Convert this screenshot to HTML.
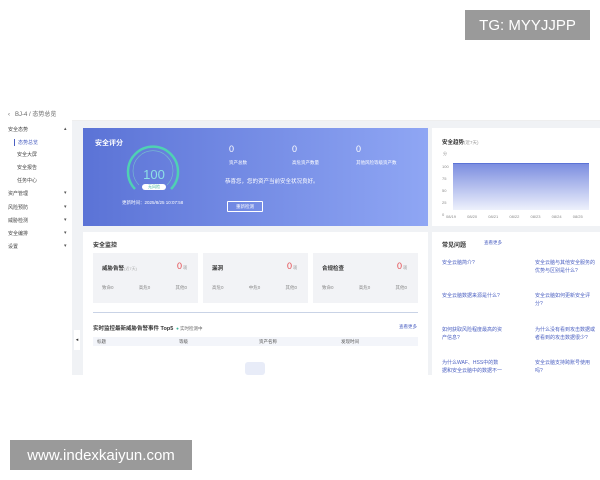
<!DOCTYPE html>
<html><head><meta charset="utf-8"><style>
*{margin:0;padding:0;box-sizing:border-box}
body{width:600px;height:480px;background:#fff;position:relative;overflow:hidden;font-family:"Liberation Sans","Noto Sans CJK SC",sans-serif;font-size:5px;color:#333}
.a{position:absolute}
.wm{background:#9a9a9a;color:#fff;font-size:15px;display:flex;align-items:center;justify-content:center}
.side div{position:absolute;left:8px;font-size:5px;color:#444}
.arr{position:absolute;left:64px;font-size:5px;color:#555}
.w{color:#fff}
.q{color:#4a5fc1;font-size:5px;line-height:8px;position:absolute;width:60px}
</style></head><body>
<div class="a wm" style="left:465px;top:10px;width:125px;height:30px">TG: MYYJJPP</div>
<div class="a wm" style="left:10px;top:440px;width:182px;height:30px">www.indexkaiyun.com</div>

<div class="a" style="left:8px;top:109px;font-size:6px;color:#666">‹ &nbsp; BJ-4 / 态势总览</div>
<div class="a" style="left:0;top:120px;width:600px;height:1px;background:#eee"></div>
<div class="a" style="left:72px;top:121px;width:528px;height:254px;background:#f0f2f5"></div>
<div class="a side" style="left:0;top:120px;width:72px;height:255px;background:#fff">
<div style="top:6px">安全态势</div><span class="arr" style="top:6px">▴</span>
<div style="top:19px;left:14px;color:#4a5fc1;border-left:1px solid #4a5fc1;padding-left:3px">态势总览</div>
<div style="top:31px;left:17px">安全大屏</div>
<div style="top:44px;left:17px">安全报告</div>
<div style="top:57px;left:17px">任务中心</div>
<div style="top:70px">资产管理</div><span class="arr" style="top:70px">▾</span>
<div style="top:84px">风险预防</div><span class="arr" style="top:84px">▾</span>
<div style="top:97px">威胁检测</div><span class="arr" style="top:97px">▾</span>
<div style="top:110px">安全编排</div><span class="arr" style="top:110px">▾</span>
<div style="top:123px">设置</div><span class="arr" style="top:123px">▾</span>
</div>
<div class="a" style="left:74px;top:330px;width:6px;height:20px;background:#fff;font-size:5px;color:#333;text-align:center;line-height:20px">◂</div>

<!-- blue card -->
<div class="a" style="left:83px;top:128px;width:345px;height:98px;background:linear-gradient(90deg,#5b73d6,#8fa6f4)"></div>
<div class="a w" style="left:95px;top:138px;font-size:7px;font-weight:bold">安全评分</div>
<svg class="a" style="left:124px;top:145px" width="58" height="50" viewBox="0 0 58 50"><path d="M11 44 A25 25 0 1 1 47 44" fill="none" stroke="#4fd1b3" stroke-width="2.5"/><path d="M15 40 A20 20 0 1 1 43 40" fill="none" stroke="#7fe0c9" stroke-width="0.6" opacity=".7"/></svg>
<div class="a" style="left:140px;top:167px;width:28px;text-align:center;font-size:13px;color:#8de0e5">100</div>
<div class="a" style="left:142px;top:184px;width:24px;height:6px;border-radius:3px;background:#fff;color:#3bb39a;font-size:4px;text-align:center;line-height:6px">无风险</div>
<div class="a w" style="left:122px;top:200px;font-size:4.5px">更新时间：2025/8/25 10:07:58</div>
<div class="a w" style="left:229px;top:144px;font-size:9px">0</div>
<div class="a w" style="left:229px;top:160px;font-size:4.5px">资产总数</div>
<div class="a w" style="left:292px;top:144px;font-size:9px">0</div>
<div class="a w" style="left:292px;top:160px;font-size:4.5px">高危资产数量</div>
<div class="a w" style="left:356px;top:144px;font-size:9px">0</div>
<div class="a w" style="left:356px;top:160px;font-size:4.5px">其他风险等级资产数</div>
<div class="a w" style="left:225px;top:177px;font-size:5.5px">恭喜您，您的资产当前安全状况良好。</div>
<div class="a w" style="left:227px;top:201px;width:36px;height:11px;border:1px solid #fff;border-radius:1px;font-size:4.5px;text-align:center;line-height:9px">重新检测</div>

<!-- trend -->
<div class="a" style="left:432px;top:128px;width:168px;height:98px;background:#fff"></div>
<div class="a" style="left:442px;top:138px;font-size:5.5px;font-weight:bold">安全趋势<span style="font-weight:normal;color:#999;font-size:4.5px">(近7天)</span></div>
<div class="a" style="left:443px;top:151px;font-size:4px;color:#888">分</div>
<div class="a" style="left:442px;top:161px;font-size:4px;color:#888;line-height:12px">100<br>75<br>50<br>25<br>0</div>
<div class="a" style="left:453px;top:163px;width:136px;height:47px;background:linear-gradient(#7c8ee0,#eef1fc);border-top:1px solid #5b73d6"></div>
<div class="a" style="left:446px;top:214px;font-size:4px;color:#888;word-spacing:10px">08/19 08/20 08/21 08/22 08/23 08/24 08/25</div>

<!-- monitor -->
<div class="a" style="left:83px;top:232px;width:345px;height:143px;background:#fff"></div>
<div class="a" style="left:93px;top:240px;font-size:6px;font-weight:bold">安全监控</div>
<div class="a" style="left:93px;top:253px;width:105px;height:50px;background:#f2f3f6"></div>
<div class="a" style="left:203px;top:253px;width:105px;height:50px;background:#f2f3f6"></div>
<div class="a" style="left:313px;top:253px;width:105px;height:50px;background:#f2f3f6"></div>
<div class="a" style="left:102px;top:264px;font-size:5.5px;font-weight:bold">威胁告警<span style="font-weight:normal;color:#aaa;font-size:4px">(近7天)</span></div>
<div class="a" style="left:177px;top:261px;font-size:9px;color:#e5484d">0<span style="font-size:4px;color:#888"> 项</span></div>
<div class="a" style="left:102px;top:285px;font-size:4.5px;color:#888;word-spacing:24px">致命0 高危0 其他0</div>
<div class="a" style="left:212px;top:264px;font-size:5.5px;font-weight:bold">漏洞</div>
<div class="a" style="left:287px;top:261px;font-size:9px;color:#e5484d">0<span style="font-size:4px;color:#888"> 项</span></div>
<div class="a" style="left:212px;top:285px;font-size:4.5px;color:#888;word-spacing:24px">高危0 中危0 其他0</div>
<div class="a" style="left:322px;top:264px;font-size:5.5px;font-weight:bold">合规检查</div>
<div class="a" style="left:397px;top:261px;font-size:9px;color:#e5484d">0<span style="font-size:4px;color:#888"> 项</span></div>
<div class="a" style="left:322px;top:285px;font-size:4.5px;color:#888;word-spacing:24px">致命0 高危0 其他0</div>
<div class="a" style="left:93px;top:312px;width:325px;height:1px;background:#c9d3e6"></div>
<div class="a" style="left:93px;top:324px;font-size:5.5px;font-weight:bold">实时监控最新威胁告警事件 Top5 <span style="font-weight:normal;color:#666;font-size:4.5px">&nbsp;<span style="color:#3bb39a">●</span> 实时检测中</span></div>
<div class="a" style="left:399px;top:324px;font-size:4.5px;color:#4a5fc1">查看更多</div>
<div class="a" style="left:93px;top:337px;width:325px;height:9px;background:#f3f5fa;font-size:4.5px;line-height:9px;color:#555">
<span class="a" style="left:4px">标题</span><span class="a" style="left:86px">等级</span><span class="a" style="left:166px">资产名称</span><span class="a" style="left:248px">发现时间</span></div>
<div class="a" style="left:245px;top:362px;width:20px;height:13px;background:#e8ecf8;border-radius:3px"></div>

<!-- faq -->
<div class="a" style="left:432px;top:232px;width:168px;height:143px;background:#fff"></div>
<div class="a" style="left:442px;top:240px;font-size:6px;font-weight:bold">常见问题</div>
<div class="a" style="left:484px;top:240px;font-size:4.5px;color:#4a5fc1">查看更多</div>
<div class="q" style="left:442px;top:259px">安全云脑简介?</div>
<div class="q" style="left:535px;top:259px">安全云脑与其他安全服务的优势与区别是什么?</div>
<div class="q" style="left:442px;top:292px">安全云脑数据来源是什么?</div>
<div class="q" style="left:535px;top:292px">安全云脑如何更新安全评分?</div>
<div class="q" style="left:442px;top:326px">如何获取风险程度最高的资产信息?</div>
<div class="q" style="left:535px;top:326px">为什么没有看到攻击数据或者看到的攻击数据很少?</div>
<div class="q" style="left:442px;top:359px">为什么WAF、HSS中的数据和安全云脑中的数据不一</div>
<div class="q" style="left:535px;top:359px">安全云脑支持跨账号使用吗?</div>
<div class="a" style="left:0;top:375px;width:600px;height:105px;background:#fff"></div>
<div class="a wm" style="left:10px;top:440px;width:182px;height:30px">www.indexkaiyun.com</div>
</body></html>
